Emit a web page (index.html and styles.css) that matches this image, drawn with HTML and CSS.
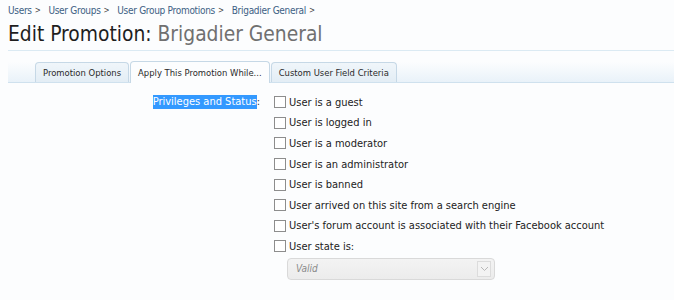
FILE: index.html
```html
<!DOCTYPE html>
<html>
<head>
<meta charset="utf-8">
<link rel="stylesheet" href="styles.css">
</head>
<body>
<div class="page">
  <nav class="crumbs">
    <a>Users</a><span class="arr">&gt;</span>
    <a>User Groups</a><span class="arr">&gt;</span>
    <a>User Group Promotions</a><span class="arr">&gt;</span>
    <a>Brigadier General</a><span class="arr">&gt;</span>
  </nav>
  <h1 class="title">Edit Promotion: <span class="sub">Brigadier General</span></h1>
  <div class="tabbar">
    <ul class="tabs">
      <li class="tab">Promotion Options</li>
      <li class="tab active">Apply This Promotion While...</li>
      <li class="tab">Custom User Field Criteria</li>
    </ul>
  </div>
  <div class="form">
    <div class="label"><span class="sel">Privileges and Status</span>:</div>
    <ul class="opts">
      <li><span class="cb"></span>User is a guest</li>
      <li><span class="cb"></span>User is logged in</li>
      <li><span class="cb"></span>User is a moderator</li>
      <li><span class="cb"></span>User is an administrator</li>
      <li><span class="cb"></span>User is banned</li>
      <li><span class="cb"></span>User arrived on this site from a search engine</li>
      <li><span class="cb"></span>User's forum account is associated with their Facebook account</li>
      <li><span class="cb"></span>User state is:</li>
      <li class="selrow"><div class="select"><span class="val">Valid</span><span class="drop"><svg width="9" height="6" viewBox="0 0 9 6"><path d="M1 1 L4.5 4.5 L8 1" fill="none" stroke="#b8b8b8" stroke-width="1"/></svg></span></div></li>
    </ul>
  </div>
</div>
</body>
</html>
```
FILE: styles.css
```css
html, body { margin: 0; padding: 0; background: #fcfdfe; }
body { font-family: "DejaVu Sans", sans-serif; font-stretch: condensed; }
.page { padding: 0 0 0 8px; }
.crumbs { font-size: 10px; letter-spacing: -0.3px; color: #3d6184; padding-top: 3px; height: 14px; display: flex; align-items: center; }
.crumbs a { color: #3d6184; }
.arr { color: #444; font-size: 8px; margin: 0 8px 0 3px; }
.title { margin: 4px 0 0 0; font-size: 20.8px; font-weight: normal; color: #1e1e1e; line-height: 26px; padding-bottom: 3px; border-bottom: 1px solid #dbeaf3; }
.title .sub { color: #707070; }
.tabbar { margin-top: 11px; height: 20px; border-bottom: 1px solid #cfe1ee; background: linear-gradient(to bottom, #fcfdfe, #e9f2f9); padding-left: 27px; display: flex; align-items: flex-end; }
.tabs { list-style: none; margin: 0; padding: 0; display: flex; gap: 1px; align-items: flex-end; }
.tab { font-size: 9.4px; color: #2a2a2a; height: 19px; line-height: 19px; padding: 0 7px; border: 1px solid #c6d8e6; border-bottom: none; border-radius: 4px 4px 0 0; background: linear-gradient(to bottom, #f0f6fa, #e3edf5); }
.tab.active { background: #fcfdfe; height: 21px; line-height: 21px; margin-bottom: -1px; position: relative; }
.form { display: flex; margin-top: 9px; font-size: 11px; }
.label { width: 252px; text-align: right; line-height: 20.6px; height: 20.6px; color: #333; }
.sel { background: #3399ff; color: #fff; display: inline-block; line-height: 14px; }
.opts { list-style: none; margin: 0 0 0 14px; padding: 0; color: #222; }
.opts li { display: flex; align-items: center; height: 20.6px; }
.cb { width: 12px; height: 12px; border: 1px solid #8d8d8d; background: #fff; margin-right: 3px; box-sizing: border-box; }
.opts li.selrow { height: auto; margin-top: 1px; padding-left: 13px; }
.select { width: 208px; height: 22px; box-sizing: border-box; border: 1px solid #d9d9d9; border-radius: 4px; background: linear-gradient(#f3f3f3, #ececec); display: flex; align-items: center; justify-content: space-between; padding: 0 3px 0 8px; }
.val { font-style: italic; color: #8a8a8a; font-size: 10px; }
.drop { width: 14px; height: 16px; border: 1px solid #dcdcdc; background: #f3f3f3; display: flex; align-items: center; justify-content: center; box-sizing: border-box; }
```
